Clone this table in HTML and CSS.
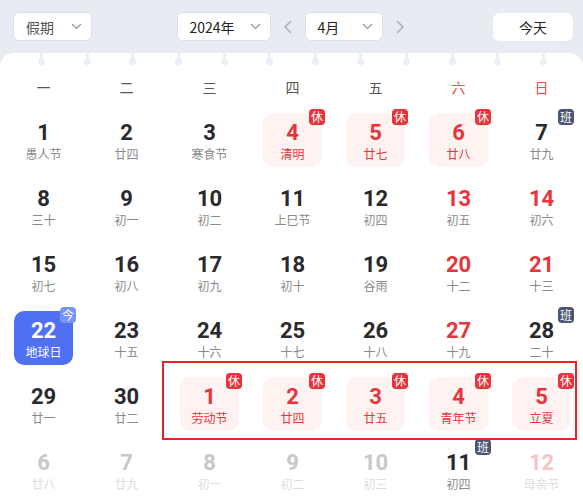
FILE: index.html
```html
<!DOCTYPE html>
<html lang="zh-CN">
<head>
    <meta charset="UTF-8">
    <title>万年历</title>
    <link rel="stylesheet" href="styles.css">
</head>
<body>
    <div class="toolbar">
        <div class="select select-type">
            <span>假期</span>
            <svg class="chev" width="11" height="7" viewBox="0 0 11 7"><polyline points="1,1 5.5,5.5 10,1"/></svg>
        </div>
        <div class="nav">
            <div class="select select-year">
                <span>2024年</span>
                <svg class="chev" width="11" height="7" viewBox="0 0 11 7"><polyline points="1,1 5.5,5.5 10,1"/></svg>
            </div>
            <svg class="arrow" width="22" height="14" viewBox="0 0 22 14"><polyline points="14,1 8,7 14,13"/></svg>
            <div class="select select-month">
                <span>4月</span>
                <svg class="chev" width="11" height="7" viewBox="0 0 11 7"><polyline points="1,1 5.5,5.5 10,1"/></svg>
            </div>
            <svg class="arrow" width="22" height="14" viewBox="0 0 22 14"><polyline points="8,1 14,7 8,13"/></svg>
        </div>
        <div class="today-btn">今天</div>
    </div>

    <div class="panel">
        <div class="rings">
            <i></i><i></i><i></i><i></i><i></i><i></i><i></i><i></i><i></i><i></i><i></i><i></i>
        </div>

        <div class="weekdays">
            <span>一</span><span>二</span><span>三</span><span>四</span><span>五</span>
            <span class="weekend">六</span><span class="weekend">日</span>
        </div>

        <div class="days">
            <!-- row 1 -->
            <div class="cell"><div class="day"><b>1</b><small>愚人节</small></div></div>
            <div class="cell"><div class="day"><b>2</b><small>廿四</small></div></div>
            <div class="cell"><div class="day"><b>3</b><small>寒食节</small></div></div>
            <div class="cell"><div class="day rest"><b>4</b><small>清明</small><em class="tag">休</em></div></div>
            <div class="cell"><div class="day rest"><b>5</b><small>廿七</small><em class="tag">休</em></div></div>
            <div class="cell"><div class="day rest"><b>6</b><small>廿八</small><em class="tag">休</em></div></div>
            <div class="cell"><div class="day"><b>7</b><small>廿九</small><em class="tag work">班</em></div></div>
            <!-- row 2 -->
            <div class="cell"><div class="day"><b>8</b><small>三十</small></div></div>
            <div class="cell"><div class="day"><b>9</b><small>初一</small></div></div>
            <div class="cell"><div class="day"><b>10</b><small>初二</small></div></div>
            <div class="cell"><div class="day"><b>11</b><small>上巳节</small></div></div>
            <div class="cell"><div class="day"><b>12</b><small>初四</small></div></div>
            <div class="cell"><div class="day weekend"><b>13</b><small>初五</small></div></div>
            <div class="cell"><div class="day weekend"><b>14</b><small>初六</small></div></div>
            <!-- row 3 -->
            <div class="cell"><div class="day"><b>15</b><small>初七</small></div></div>
            <div class="cell"><div class="day"><b>16</b><small>初八</small></div></div>
            <div class="cell"><div class="day"><b>17</b><small>初九</small></div></div>
            <div class="cell"><div class="day"><b>18</b><small>初十</small></div></div>
            <div class="cell"><div class="day"><b>19</b><small>谷雨</small></div></div>
            <div class="cell"><div class="day weekend"><b>20</b><small>十二</small></div></div>
            <div class="cell"><div class="day weekend"><b>21</b><small>十三</small></div></div>
            <!-- row 4 -->
            <div class="cell"><div class="day today"><b>22</b><small>地球日</small><em class="tag">今</em></div></div>
            <div class="cell"><div class="day"><b>23</b><small>十五</small></div></div>
            <div class="cell"><div class="day"><b>24</b><small>十六</small></div></div>
            <div class="cell"><div class="day"><b>25</b><small>十七</small></div></div>
            <div class="cell"><div class="day"><b>26</b><small>十八</small></div></div>
            <div class="cell"><div class="day weekend"><b>27</b><small>十九</small></div></div>
            <div class="cell"><div class="day"><b>28</b><small>二十</small><em class="tag work">班</em></div></div>
            <!-- row 5 -->
            <div class="cell"><div class="day"><b>29</b><small>廿一</small></div></div>
            <div class="cell"><div class="day"><b>30</b><small>廿二</small></div></div>
            <div class="cell"><div class="day rest"><b>1</b><small>劳动节</small><em class="tag">休</em></div></div>
            <div class="cell"><div class="day rest"><b>2</b><small>廿四</small><em class="tag">休</em></div></div>
            <div class="cell"><div class="day rest"><b>3</b><small>廿五</small><em class="tag">休</em></div></div>
            <div class="cell"><div class="day rest"><b>4</b><small>青年节</small><em class="tag">休</em></div></div>
            <div class="cell"><div class="day rest"><b>5</b><small>立夏</small><em class="tag">休</em></div></div>
            <!-- row 6 -->
            <div class="cell"><div class="day other"><b>6</b><small>廿八</small></div></div>
            <div class="cell"><div class="day other"><b>7</b><small>廿九</small></div></div>
            <div class="cell"><div class="day other"><b>8</b><small>初一</small></div></div>
            <div class="cell"><div class="day other"><b>9</b><small>初二</small></div></div>
            <div class="cell"><div class="day other"><b>10</b><small>初三</small></div></div>
            <div class="cell"><div class="day"><b>11</b><small>初四</small><em class="tag work">班</em></div></div>
            <div class="cell"><div class="day other weekend"><b>12</b><small>母亲节</small></div></div>

            <div class="holiday-range"></div>
        </div>
    </div>
</body>
</html>
```

FILE: styles.css
```css
body {
    margin: 0;
    font-family: "Noto Sans CJK SC", "Noto Sans", sans-serif;
    background-color: #e9ebf3;
    overflow: hidden;
    height: 501px;
}
.toolbar {
    display: flex;
    justify-content: space-between;
    align-items: center;
    height: 53px;
    padding: 0 10px 0 13px;
    box-sizing: border-box;
}
.nav {
    display: flex;
    align-items: center;
    gap: 6px;
    margin-left: 2px;
}
.select {
    display: flex;
    align-items: center;
    justify-content: space-between;
    height: 29px;
    box-sizing: border-box;
    padding: 0 9px 0 12px;
    background-color: #fff;
    border: 1px solid #dcdfe8;
    border-radius: 6px;
    font-size: 14px;
    color: #222;
}
.select-type {
    width: 79px;
    color: #555;
}
.select-year {
    width: 94px;
}
.select-month {
    width: 78px;
}
.chev polyline,
.arrow polyline {
    fill: none;
    stroke: #8e94a3;
    stroke-width: 1.2;
}
.arrow polyline {
    stroke: #aab0bc;
    stroke-width: 1.5;
}
.today-btn {
    width: 80px;
    height: 28px;
    line-height: 28px;
    text-align: center;
    background-color: #fff;
    border-radius: 7px;
    font-size: 14px;
    color: #222;
}
.panel {
    background-color: #fff;
    border-radius: 14px 14px 0 0;
    height: 448px;
}
.rings {
    display: grid;
    grid-template-columns: repeat(12, 1fr);
    padding: 0 17px 0 19px;
    height: 14px;
}
.rings i {
    position: relative;
    justify-self: center;
    width: 3px;
    height: 8px;
    background-color: #eceef5;
}
.rings i::after {
    content: "";
    position: absolute;
    left: -2px;
    top: 5px;
    width: 7px;
    height: 7px;
    border-radius: 50%;
    background-color: #eceef5;
}
.weekdays {
    display: grid;
    grid-template-columns: repeat(7, 1fr);
    height: 40px;
    padding-left: 2px;
    align-items: center;
    text-align: center;
    font-size: 14px;
    color: #555;
}
.weekdays .weekend {
    color: #f0484d;
}
.days {
    position: relative;
    display: grid;
    grid-template-columns: repeat(7, 1fr);
    grid-auto-rows: 66px;
    padding-left: 2px;
}
.cell {
    display: flex;
    align-items: center;
    justify-content: center;
}
.day {
    position: relative;
    display: flex;
    flex-direction: column;
    align-items: center;
    justify-content: center;
    width: 59px;
    height: 54px;
    border-radius: 10px;
}
.day b {
    font-family: Roboto, "DejaVu Sans", sans-serif;
    font-size: 22px;
    font-weight: 700;
    line-height: 26px;
    color: #2a2a2e;
}
.day small {
    font-size: 12px;
    line-height: 15px;
    color: #8a8a8a;
}
.day.weekend b {
    color: #e8353c;
}
.day.rest {
    background-color: #fff3f2;
}
.day.rest b,
.day.rest small {
    color: #e8353c;
}
.day.today {
    background-color: #5070f2;
}
.day.today b,
.day.today small {
    color: #fff;
}
.day.other b {
    color: #c8c8c8;
}
.day.other small {
    color: #dedede;
}
.day.other.weekend b {
    color: #f7c3c5;
}
.tag {
    position: absolute;
    top: -4px;
    right: -3px;
    width: 16px;
    height: 16px;
    line-height: 16px;
    border-radius: 4px;
    background-color: #e8333a;
    color: #fff;
    font-size: 12px;
    font-style: normal;
    text-align: center;
}
.tag.work {
    background-color: #4b5472;
}
.today .tag {
    background-color: #7893f6;
}
.holiday-range {
    position: absolute;
    left: 162px;
    top: 254px;
    width: 415px;
    height: 79px;
    border: 2px solid #e8222a;
    box-sizing: border-box;
    pointer-events: none;
}
```
